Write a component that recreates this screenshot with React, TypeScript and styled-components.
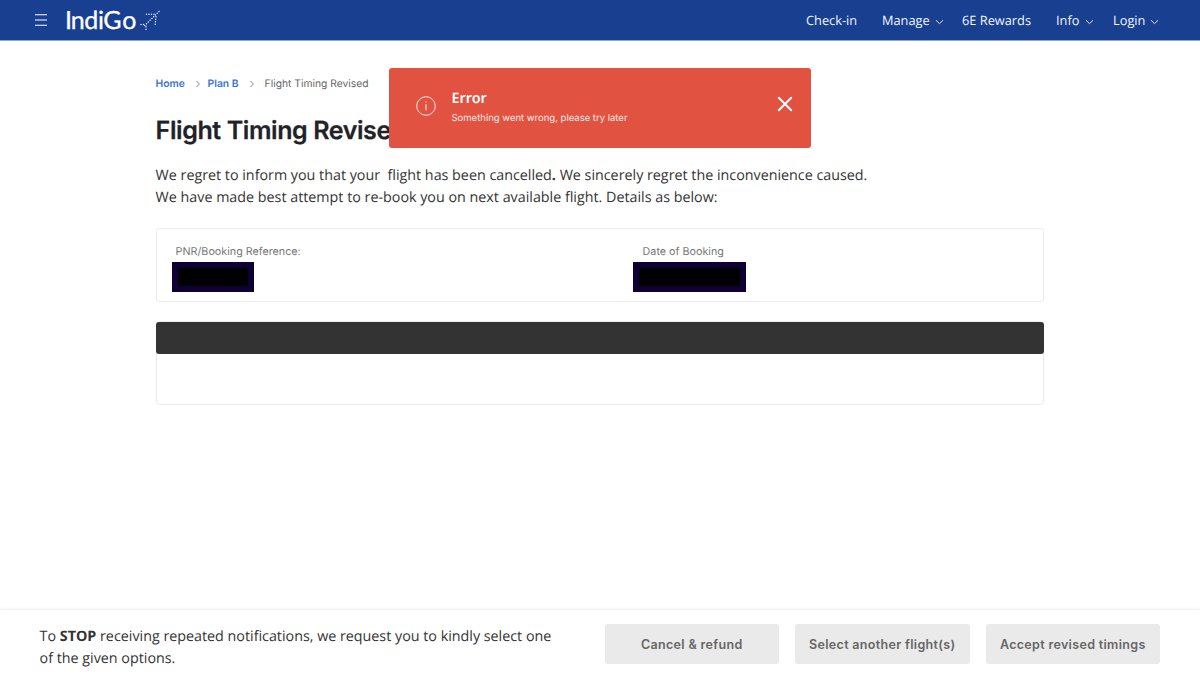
import React from "react";
import styled, { createGlobalStyle } from "styled-components";

const GlobalStyle = createGlobalStyle`
  * { box-sizing: border-box; }
  body { margin: 0; background: #fff; color: #333; font-family: "Open Sans", sans-serif; overflow: hidden; text-rendering: geometricPrecision; -webkit-font-smoothing: antialiased; }
  p, h1, h2 { margin: 0; }
  button { border: 0; padding: 0; font: inherit; background: none; }
`;

const Page = styled.div`
  display: flex;
  flex-direction: column;
  height: 683px;
`;

const Header = styled.header`
  display: flex;
  align-items: center;
  height: 41px;
  flex: none;
  padding: 0 41px 0 35px;
  background: #193f91;
  border-bottom: 1px solid #8fa3cc;
  color: #fff;
`;

const MenuButton = styled.button`
  display: flex;
  width: 31px;
  color: #fff;
`;

const Brand = styled.a`
  display: flex;
  align-items: center;
  flex: 1;
  color: #fff;
`;

const Nav = styled.nav`
  display: flex;
  align-items: center;
`;

const NavItem = styled.a<{ $width: number; $gap: number }>`
  display: flex;
  align-items: center;
  justify-content: space-between;
  width: ${(p) => p.$width}px;
  margin-left: ${(p) => p.$gap}px;
  font-size: 12.8px;
  line-height: 21px;
  white-space: nowrap;
  color: #f1f5fc;
`;

const ChevronIcon = styled.svg`
  margin-top: 4px;
`;

const Main = styled.main`
  flex: 1;
  width: 888px;
  margin-left: 155.6px;
  padding-top: 35px;
`;

const Crumbs = styled.nav`
  display: flex;
  align-items: center;
  height: 16px;
  font: 400 10.3px/16px Inter, sans-serif;
  color: #666;
`;

const CrumbLink = styled.a<{ $width: number }>`
  width: ${(p) => p.$width}px;
  white-space: nowrap;
  font-weight: 600;
  color: #3b76d6;
`;

const CrumbArrow = styled.svg<{ $before: number; $after: number }>`
  margin-left: ${(p) => p.$before}px;
  margin-right: ${(p) => p.$after}px;
`;

const Title = styled.h1`
  margin-top: 21px;
  font: 600 25px/36px Inter, sans-serif;
  letter-spacing: -0.4px;
  color: #212227;
  -webkit-text-stroke: 0.25px #212227;
`;

const Intro = styled.p`
  margin-top: 16px;
  font-size: 14.3px;
  line-height: 22.4px;
  white-space: pre-wrap;
`;

const BookingCard = styled.section`
  display: grid;
  grid-template-columns: 461px 1fr;
  height: 74px;
  margin-top: 18px;
  padding: 15px 15px 0;
  border: 1px solid #ededed;
  border-radius: 3px;
`;

const Label = styled.div<{ $indent: number }>`
  padding-left: ${(p) => p.$indent}px;
  font: 400 10.75px/16px Inter, sans-serif;
  color: #777;
`;

const Redacted = styled.div<{ $width: number }>`
  width: ${(p) => p.$width}px;
  height: 30px;
  margin-top: 2px;
  border: 6px solid #0e0034;
  background: #000;
`;

const FlightCard = styled.section`
  height: 84px;
  margin-top: 19px;
  border: 1px solid #ebebeb;
  border-radius: 4px;
`;

const FlightHead = styled.div`
  height: 32px;
  margin: 0 -1px;
  border-radius: 3px;
  background: #333;
`;

const Toast = styled.div`
  position: absolute;
  top: 68px;
  left: 389px;
  display: flex;
  align-items: flex-start;
  width: 422px;
  height: 79.5px;
  padding: 20px 18px 0 27px;
  border-radius: 3px;
  background: #e25241;
  color: #fff;
`;

const ToastIcon = styled.svg`
  margin: 8px 15.5px 0 0;
`;

const ToastBody = styled.div`
  flex: 1;
  padding-top: 1px;
`;

const ToastTitle = styled.h2`
  font: 600 14.4px/20px "Noto Sans", sans-serif;
`;

const ToastText = styled.p`
  margin-top: 2px;
  font: 400 9.5px/15px Inter, sans-serif;
  color: #ffe9e5;
`;

const Close = styled.button`
  display: flex;
  margin-top: 8px;
  color: #fff;
`;

const Footer = styled.footer`
  display: flex;
  align-items: flex-start;
  justify-content: space-between;
  flex: none;
  height: 74px;
  padding: 14px 40px 0 39.6px;
  border-top: 1px solid #f1f1f1;
  box-shadow: 0 -1px 2px rgba(0, 0, 0, 0.03);
`;

const Notice = styled.p`
  width: 520px;
  padding-top: 1.6px;
  font-size: 14.3px;
  line-height: 22.4px;
`;

const Actions = styled.div`
  display: flex;
  gap: 16px;
`;

const Action = styled.button`
  width: 174.5px;
  height: 40px;
  border-radius: 3px;
  background: #eaeaea;
  color: #666;
  font: 600 12.5px/20px Inter, sans-serif;
  letter-spacing: 0.33px;
  padding-top: 1px;
`;

const Chevron = () => (
  <ChevronIcon width="9" height="6" viewBox="0 0 9 6" fill="none" stroke="currentColor" strokeWidth=".9">
    <path d="M.9 1.2 4.5 4.6 8.1 1.2" />
  </ChevronIcon>
);

const Logo = () => (
  <svg width="96" height="32" viewBox="0 0 96 32">
    <text x="-1 4.8 18.3 32 37.3 56.2" y="25.4" fill="#fff" stroke="#fff" strokeWidth=".3" fontFamily="Lato, sans-serif" fontSize="25">IndiGo</text>
    <g fill="none" stroke="#e6ecf7" strokeWidth="1.5" strokeLinecap="round" strokeDasharray="0 2.5">
      <path d="M93 7.5 78.5 21.8" />
      <path d="M80.5 10.3h9.5" />
      <path d="M90 12.8 89 21.8" />
      <path d="M75 20.5h4" />
      <path d="M80 22.8v4" />
    </g>
  </svg>
);

const Arrow = ({ before, after }: { before: number; after: number }) => (
  <CrumbArrow $before={before} $after={after} width="4" height="8" viewBox="0 0 4 8" fill="none" stroke="#888">
    <path d="M.5 1 3.4 4 .5 7" />
  </CrumbArrow>
);

const navItems = [
  { name: "Check-in", width: 51, gap: 0, menu: false },
  { name: "Manage", width: 62, gap: 25, menu: true },
  { name: "6E Rewards", width: 69, gap: 18, menu: false },
  { name: "Info", width: 38, gap: 25, menu: true },
  { name: "Login", width: 46, gap: 19, menu: true },
];

export default function App() {
  return (
    <Page>
      <GlobalStyle />
      <Header>
        <MenuButton aria-label="Menu">
          <svg width="12" height="12" viewBox="0 0 12 12" stroke="currentColor" strokeWidth="1.1">
            <path d="M0 .8h12M0 6h12M0 11.2h12" />
          </svg>
        </MenuButton>
        <Brand><Logo /></Brand>
        <Nav>
          {navItems.map((item) => (
            <NavItem key={item.name} $width={item.width} $gap={item.gap}>
              {item.name}
              {item.menu && <Chevron />}
            </NavItem>
          ))}
        </Nav>
      </Header>
      <Main>
        <Crumbs>
          <CrumbLink $width={30}>Home</CrumbLink>
          <Arrow before={10} after={8} />
          <CrumbLink $width={32}>Plan B</CrumbLink>
          <Arrow before={10} after={11} />
          <span>Flight Timing Revised</span>
        </Crumbs>
        <Title>Flight Timing Revised</Title>
        <Intro>
          {"We regret to inform you that your  flight has been cancelled"}<b>.</b>
          {" We sincerely regret the inconvenience caused.\nWe have made best attempt to re-book you on next available flight. Details as below:"}
        </Intro>
        <BookingCard>
          <div>
            <Label $indent={4}>PNR/Booking Reference:</Label>
            <Redacted $width={82} />
          </div>
          <div>
            <Label $indent={10}>Date of Booking</Label>
            <Redacted $width={113} />
          </div>
        </BookingCard>
        <FlightCard><FlightHead /></FlightCard>
      </Main>
      <Footer>
        <Notice>
          To <b>STOP</b> receiving repeated notifications, we request you to kindly select one of the given options.
        </Notice>
        <Actions>
          <Action>Cancel &amp; refund</Action>
          <Action>Select another flight(s)</Action>
          <Action>Accept revised timings</Action>
        </Actions>
      </Footer>
      <Toast role="alert">
        <ToastIcon width="20" height="20" viewBox="0 0 20 20" fill="none" stroke="#fff" strokeWidth=".9">
          <circle cx="10" cy="10" r="9.3" />
          <path d="M10 8.3v6.2M10 5.4v1.2" />
        </ToastIcon>
        <ToastBody>
          <ToastTitle>Error</ToastTitle>
          <ToastText>Something went wrong, please try later</ToastText>
        </ToastBody>
        <Close aria-label="Close">
          <svg width="16" height="16" viewBox="0 0 16 16" stroke="currentColor" strokeWidth="2" strokeLinecap="round">
            <path d="m1.8 1.8 12.4 12.4M14.2 1.8 1.8 14.2" />
          </svg>
        </Close>
      </Toast>
    </Page>
  );
}
